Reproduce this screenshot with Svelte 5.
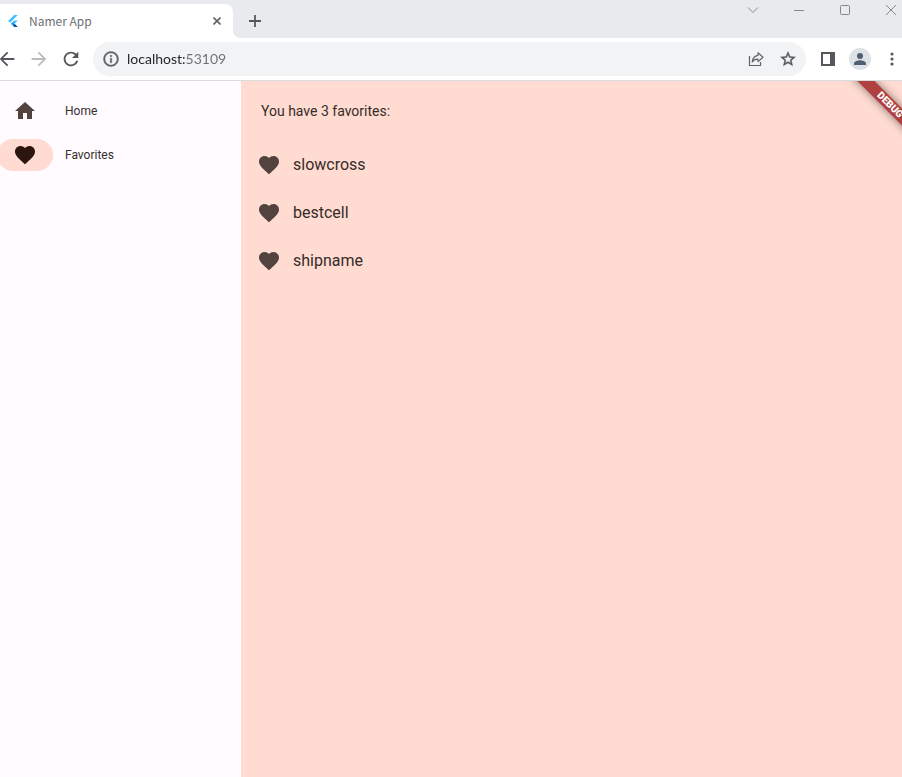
<script>
  const home = 'M10 20v-6h4v6h5v-8h3L12 3 2 12h3v8z';
  const heart =
    'M12 21.35l-1.45-1.32C5.4 15.36 2 12.28 2 8.5 2 5.42 4.42 3 7.5 3c1.74 0 3.41.81 4.5 2.09C13.09 3.81 14.76 3 16.5 3 19.58 3 22 5.42 22 8.5c0 3.78-3.4 6.86-8.55 11.54L12 21.35z';

  const destinations = [
    { label: 'Home', icon: home },
    { label: 'Favorites', icon: heart }
  ];
  const favorites = ['slowcross', 'bestcell', 'shipname'];

  let selected = $state(1);
  let address = $state('localhost:53109');
</script>

<div class="window">
  <header class="titlebar">
    <div class="tab">
      <svg class="logo" viewBox="0 0 24 24" width="12" height="12" aria-hidden="true">
        <path fill="#42c3f7" d="M14.3 0 2.3 12l3.7 3.7L21.7 0z" />
        <path fill="#42c3f7" d="M14.3 11.1 7.9 17.5l3.7 3.7 10.1-10.1z" />
        <path fill="#1f9ff0" d="m7.9 17.5 3.7-3.7 3.7 3.7-3.7 3.7z" />
        <path fill="#01579b" d="m11.6 21.2 3.7-3.7 6.4 6.5h-7.4z" />
      </svg>
      <span class="tab-title">Namer App</span>
      <button class="tab-close" aria-label="Close tab">
        <svg viewBox="0 0 8 8" width="8" height="8"><path d="M.5.5l7 7M7.500.5l-7 7" stroke="#5f6368" stroke-width="1.600" /></svg>
      </button>
    </div>
    <button class="new-tab" aria-label="New tab">
      <svg viewBox="0 0 12 12" width="12" height="12"><path d="M6 0v12M0 6h12" stroke="#55585d" stroke-width="1.8" /></svg>
    </button>
    <div class="controls">
      <button aria-label="Search tabs">
        <svg viewBox="0 0 12 12" width="12" height="12"><path d="M1 3.5l5 5 5-5" /></svg>
      </button>
      <button aria-label="Minimize">
        <svg viewBox="0 0 12 12" width="12" height="12"><path d="M1 6.5h10" /></svg>
      </button>
      <button aria-label="Maximize">
        <svg viewBox="0 0 12 12" width="12" height="12"><rect x="1.5" y="1.5" width="9" height="9" rx="1" /></svg>
      </button>
      <button aria-label="Close window">
        <svg viewBox="0 0 12 12" width="12" height="12"><path d="M1 1l10 10M11 1L1 11" /></svg>
      </button>
    </div>
  </header>

  <div class="toolbar">
    <div class="group left">
      <button aria-label="Back">
        <svg viewBox="0 0 24 24" width="22" height="22"><path fill="#53565a" d="M20 11H7.83l5.59-5.59L12 4l-8 8 8 8 1.41-1.41L7.83 13H20v-2z" /></svg>
      </button>
      <button aria-label="Forward" disabled>
        <svg viewBox="0 0 24 24" width="22" height="22"><path fill="#babcbe" d="M12 4l-1.41 1.41L16.17 11H4v2h12.17l-5.58 5.59L12 20l8-8z" /></svg>
      </button>
      <button aria-label="Reload">
        <svg viewBox="0 0 24 24" width="22" height="22"><path fill="#53565a" d="M17.65 6.35C16.2 4.9 14.21 4 12 4c-4.42 0-7.99 3.58-7.99 8s3.57 8 7.99 8c3.73 0 6.84-2.55 7.73-6h-2.08c-.82 2.33-3.04 4-5.65 4-3.31 0-6-2.69-6-6s2.69-6 6-6c1.66 0 3.14.69 4.22 1.78L13 11h7V4l-2.35 2.35z" /></svg>
      </button>
    </div>

    <div class="omnibox">
      <svg viewBox="0 0 24 24" width="18" height="18" aria-hidden="true"><path fill="#5f6368" stroke="#5f6368" stroke-width=".5" d="M11 7h2v2h-2zm0 4h2v6h-2zm1-9C6.48 2 2 6.48 2 12s4.48 10 10 10 10-4.48 10-10S17.52 2 12 2zm0 18c-4.41 0-8-3.59-8-8s3.59-8 8-8 8 3.59 8 8-3.59 8-8 8z" /></svg>
      <input type="text" aria-label="Address" bind:value={address} />
      <button aria-label="Share">
        <svg viewBox="0 0 16 16" width="16" height="16" fill="none" stroke="#5f6368" stroke-width="1.2"><path d="M1.5 5v9.5h11V11" /><path stroke-linejoin="round" d="M10 1.8l5 4.4-5 4.4V8.2C7.300 8 5.500 9 4.200 11 4.500 7.500 6.500 4.800 10 4.300z" /></svg>
      </button>
      <button aria-label="Bookmark">
        <svg viewBox="0 0 24 24" width="18" height="18"><path fill="#53565a" stroke="#53565a" stroke-width=".5" d="M22 9.240l-7.190-.62L12 2 9.190 8.630 2 9.240l5.460 4.730L5.820 21 12 17.270 18.180 21l-1.630-7.030L22 9.240zM12 15.400l-3.760 2.270 1-4.280-3.320-2.880 4.380-.38L12 6.100l1.710 4.040 4.380.38-3.320 2.880 1 4.280L12 15.400z" /></svg>
      </button>
    </div>

    <div class="group right">
      <button aria-label="Side panel">
        <svg viewBox="0 0 14 14" width="14" height="14"><path fill="#55585d" fill-rule="evenodd" d="M0 0h14v14H0zM2 2v10h7V2z" /></svg>
      </button>
      <button aria-label="Profile">
        <svg viewBox="0 0 22 22" width="22" height="22"><circle cx="11" cy="11" r="11" fill="#dee1e6" /><circle cx="11" cy="8" r="3" fill="#4f5d75" /><path fill="#4f5d75" d="M5 17v-1.500c0-2.200 4-3.300 6-3.300s6 1.100 6 3.300V17z" /></svg>
      </button>
      <button aria-label="Menu">
        <svg viewBox="0 0 4 14" width="4" height="14" fill="#55585d"><circle cx="2" cy="2" r="1.6" /><circle cx="2" cy="7" r="1.6" /><circle cx="2" cy="12" r="1.6" /></svg>
      </button>
    </div>
  </div>

  <div class="app">
    <nav class="rail">
      {#each destinations as item, i}
        <button class="destination" class:selected={selected === i} onclick={() => (selected = i)}>
          <span class="indicator">
            <svg viewBox="0 0 24 24" width="24" height="24"><path d={item.icon} /></svg>
          </span>
          <span>{item.label}</span>
        </button>
      {/each}
    </nav>

    <main class="page">
      <p>You have {favorites.length} favorites:</p>
      <ul>
        {#each favorites as name}
          <li>
            <svg viewBox="0 0 24 24" width="24" height="24"><path d={heart} /></svg>
            <span>{name}</span>
          </li>
        {/each}
      </ul>
      <div class="banner">DEBUG</div>
    </main>
  </div>
</div>

<style>
  :global(body) {
    margin: 0;
  }

  .window {
    display: flex;
    flex-direction: column;
    min-height: 100vh;
    overflow: hidden;
    background: #fff;
    font-family: Roboto, sans-serif;
  }

  button {
    display: flex;
    align-items: center;
    justify-content: center;
    padding: 0;
    border: 0;
    background: none;
    font: inherit;
    color: inherit;
  }

  .titlebar {
    display: flex;
    height: 38px;
    background: #e8eaed;
  }

  .tab {
    position: relative;
    display: flex;
    align-items: center;
    box-sizing: border-box;
    width: 233px;
    height: 34px;
    margin-top: 4px;
    padding: 0 8px 0 7px;
    border-radius: 0 8px 0 0;
    background: #fff;
  }

  /* concave foot joining the tab to the toolbar */
  .tab::after {
    content: '';
    position: absolute;
    left: 100%;
    bottom: 0;
    width: 8px;
    height: 8px;
    background: radial-gradient(circle at 100% 0, transparent 8px, #fff 8px);
  }

  .tab-title {
    flex: 1;
    margin-left: 10px;
    font: 12px/16px 'Noto Sans CJK KR', 'Noto Sans', sans-serif;
    color: #6b6f74;
  }

  .tab-close {
    width: 16px;
    height: 16px;
  }

  .new-tab {
    width: 28px;
    height: 28px;
    margin: 7px 0 0 8px;
  }

  .controls {
    display: flex;
    margin: 0 -12px 0 auto;
  }

  .controls button {
    width: 46px;
    height: 20px;
  }

  .controls svg {
    fill: none;
    stroke: #85878a;
  }

  .toolbar {
    display: flex;
    align-items: center;
    gap: 6px;
    height: 42px;
    border-bottom: 1px solid #dadce0;
  }

  .group {
    display: flex;
  }

  .group.left {
    margin-left: -9px;
  }

  .group.right {
    margin-right: -6px;
  }

  .toolbar button {
    width: 32px;
    height: 32px;
  }

  .omnibox {
    display: flex;
    flex: 1;
    align-items: center;
    height: 34px;
    padding: 0 2px 0 9px;
    border-radius: 17px;
    background: #f1f3f4;
  }

  .omnibox input {
    flex: 1;
    min-width: 0;
    margin-left: 7px;
    padding: 0;
    border: 0;
    outline: 0;
    font: 14px/20px Lato, 'Noto Sans CJK KR', sans-serif;
    /* host in dark ink, port in grey */
    color: transparent;
    caret-color: #202124;
    background: linear-gradient(90deg, #202124 59px, #6b6f74 59px);
    -webkit-background-clip: text;
    background-clip: text;
  }

  .app {
    display: flex;
    flex: 1;
  }

  .rail {
    display: flex;
    flex: none;
    flex-direction: column;
    gap: 12px;
    box-sizing: border-box;
    width: 241px;
    padding-top: 14px;
    background: #fffbff;
  }

  .destination {
    justify-content: flex-start;
    gap: 12px;
    height: 32px;
    margin-left: -3px;
    font-size: 12px;
    line-height: 16px;
    color: #362f2d;
  }

  .indicator {
    display: flex;
    align-items: center;
    justify-content: center;
    width: 56px;
    height: 32px;
    border-radius: 16px;
    fill: #53433f;
  }

  .selected .indicator {
    background: #ffdbd1;
    fill: #2c150f;
  }

  .page {
    position: relative;
    flex: 1;
    overflow: hidden;
    background: #ffdbd1;
    color: #362c29;
  }

  p {
    margin: 20px;
    font-size: 14px;
    line-height: 20px;
  }

  ul {
    margin: 0;
    padding: 0 16px;
    list-style: none;
  }

  li {
    display: flex;
    align-items: center;
    gap: 12px;
    height: 48px;
    font-size: 16px;
    line-height: 24px;
  }

  li svg {
    fill: #53433f;
  }

  .banner {
    position: absolute;
    top: 18px;
    right: -38px;
    width: 100px;
    height: 12px;
    transform: rotate(45deg);
    background: #b0403f;
    box-shadow: 0 0 8px rgba(0, 0, 0, 0.5);
    color: #fff;
    font-size: 10px;
    font-weight: 900;
    line-height: 12px;
    text-align: center;
  }
</style>
